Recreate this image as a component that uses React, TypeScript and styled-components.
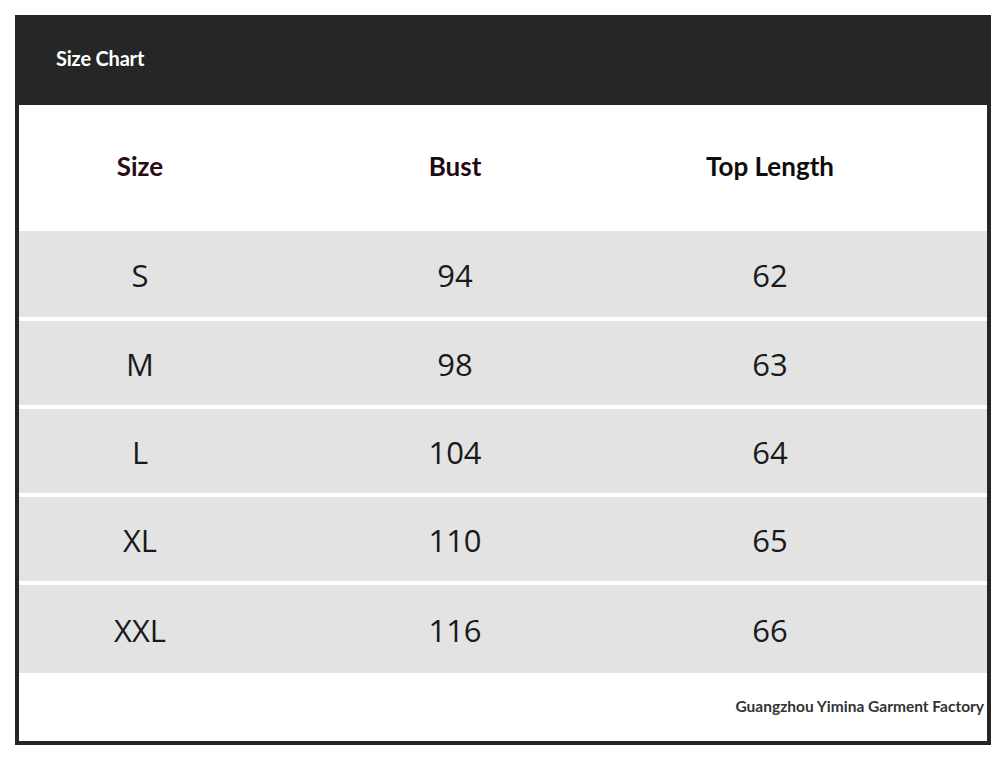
import React from "react";
import styled, { createGlobalStyle } from "styled-components";

const Global = createGlobalStyle`
  html, body { margin: 0; padding: 0; background: #ffffff; }
  body { font-family: "Open Sans", "Noto Sans", sans-serif; }
`;

const Page = styled.div`
  padding: 15px;
  width: 1006px;
  box-sizing: border-box;
`;

const Frame = styled.div`
  width: 976px;
  height: 730px;
  box-sizing: border-box;
  border: 4px solid #262626;
  border-top: none;
  display: flex;
  flex-direction: column;
  background: #ffffff;
`;

const TitleBar = styled.div`
  height: 90px;
  margin: 0 -4px;
  background: #262626;
  display: flex;
  align-items: center;
  padding-left: 41px;
  padding-bottom: 5px;
  box-sizing: border-box;
  color: #ffffff;
  font-family: "Lato", "Liberation Sans", sans-serif;
  font-weight: 700;
  font-size: 20px;
  letter-spacing: -0.2px;
`;

const Row = styled.div<{ $h: number; $bg: string }>`
  height: ${(p) => p.$h}px;
  background: ${(p) => p.$bg};
  display: grid;
  grid-template-columns: 242px 388px 242px 1fr;
  align-items: center;
  flex-shrink: 0;
`;

const Rows = styled.div`
  display: flex;
  flex-direction: column;
  gap: 4px;
`;

const HeadCell = styled.div<{ $color: string }>`
  text-align: center;
  font-family: "Lato", "Liberation Sans", sans-serif;
  font-weight: 700;
  font-size: 26px;
  color: ${(p) => p.$color};
  padding-bottom: 4px;
`;

const Cell = styled.div`
  text-align: center;
  font-family: "Open Sans", "Noto Sans", sans-serif;
  font-size: 31px;
  color: #1a1a1a;
  padding-top: 1px;
`;

const Footer = styled.div`
  flex: 1;
  display: flex;
  justify-content: flex-end;
  align-items: center;
  padding-right: 3px;
  padding-bottom: 2px;
  font-family: "Lato", "Liberation Sans", sans-serif;
  font-weight: 700;
  font-size: 15.5px;
  color: #333333;
`;

const data = [
  { s: "S", b: "94", l: "62", h: 86 },
  { s: "M", b: "98", l: "63", h: 84 },
  { s: "L", b: "104", l: "64", h: 84 },
  { s: "XL", b: "110", l: "65", h: 84 },
  { s: "XXL", b: "116", l: "66", h: 88 },
];

export default function App() {
  return (
    <>
      <Global />
      <Page>
        <Frame>
          <TitleBar>Size Chart</TitleBar>
          <Row $h={126} $bg="#ffffff">
            <HeadCell $color="#2a0b17">Size</HeadCell>
            <HeadCell $color="#1f0a14">Bust</HeadCell>
            <HeadCell $color="#0d0d0d">Top Length</HeadCell>
          </Row>
          <Rows>
            {data.map((r) => (
              <Row key={r.s} $h={r.h} $bg="#e3e3e3">
                <Cell>{r.s}</Cell>
                <Cell>{r.b}</Cell>
                <Cell>{r.l}</Cell>
              </Row>
            ))}
          </Rows>
          <Footer>Guangzhou Yimina Garment Factory</Footer>
        </Frame>
      </Page>
    </>
  );
}
